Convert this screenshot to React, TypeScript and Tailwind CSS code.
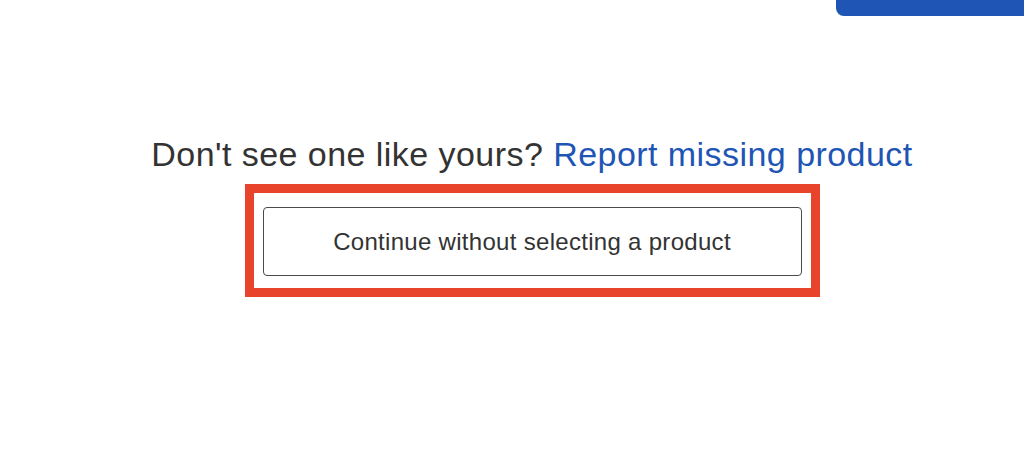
import React from 'react';

const App: React.FC = () => {
  return (
    <div className="w-[1024px] h-[449px] bg-white overflow-hidden" style={{ fontFamily: '"Liberation Sans", Arial, sans-serif' }}>
      <div className="flex justify-end">
        <div className="w-[188px] h-[16px] bg-[#1f55b4] rounded-bl-[8px]" />
      </div>
      <div className="flex flex-col items-center pl-[40px] pt-[118px]">
        <p className="text-[34px] leading-[40px] tracking-[0.45px] text-[#333333]">
          Don't see one like yours?{' '}
          <a href="#" className="text-[#1f55b4]">Report missing product</a>
        </p>
        <div className="mt-[10px] border-[9px] border-[#e8432b] pt-[14px] pb-[12px] pl-[9px] pr-[9px]">
          <button
            type="button"
            className="w-[539px] h-[69px] border-[1.5px] border-[#4a4a4a] rounded-[4px] text-[24px] tracking-[0.3px] text-[#333333] bg-white"
          >
            Continue without selecting a product
          </button>
        </div>
      </div>
    </div>
  );
};

export default App;
